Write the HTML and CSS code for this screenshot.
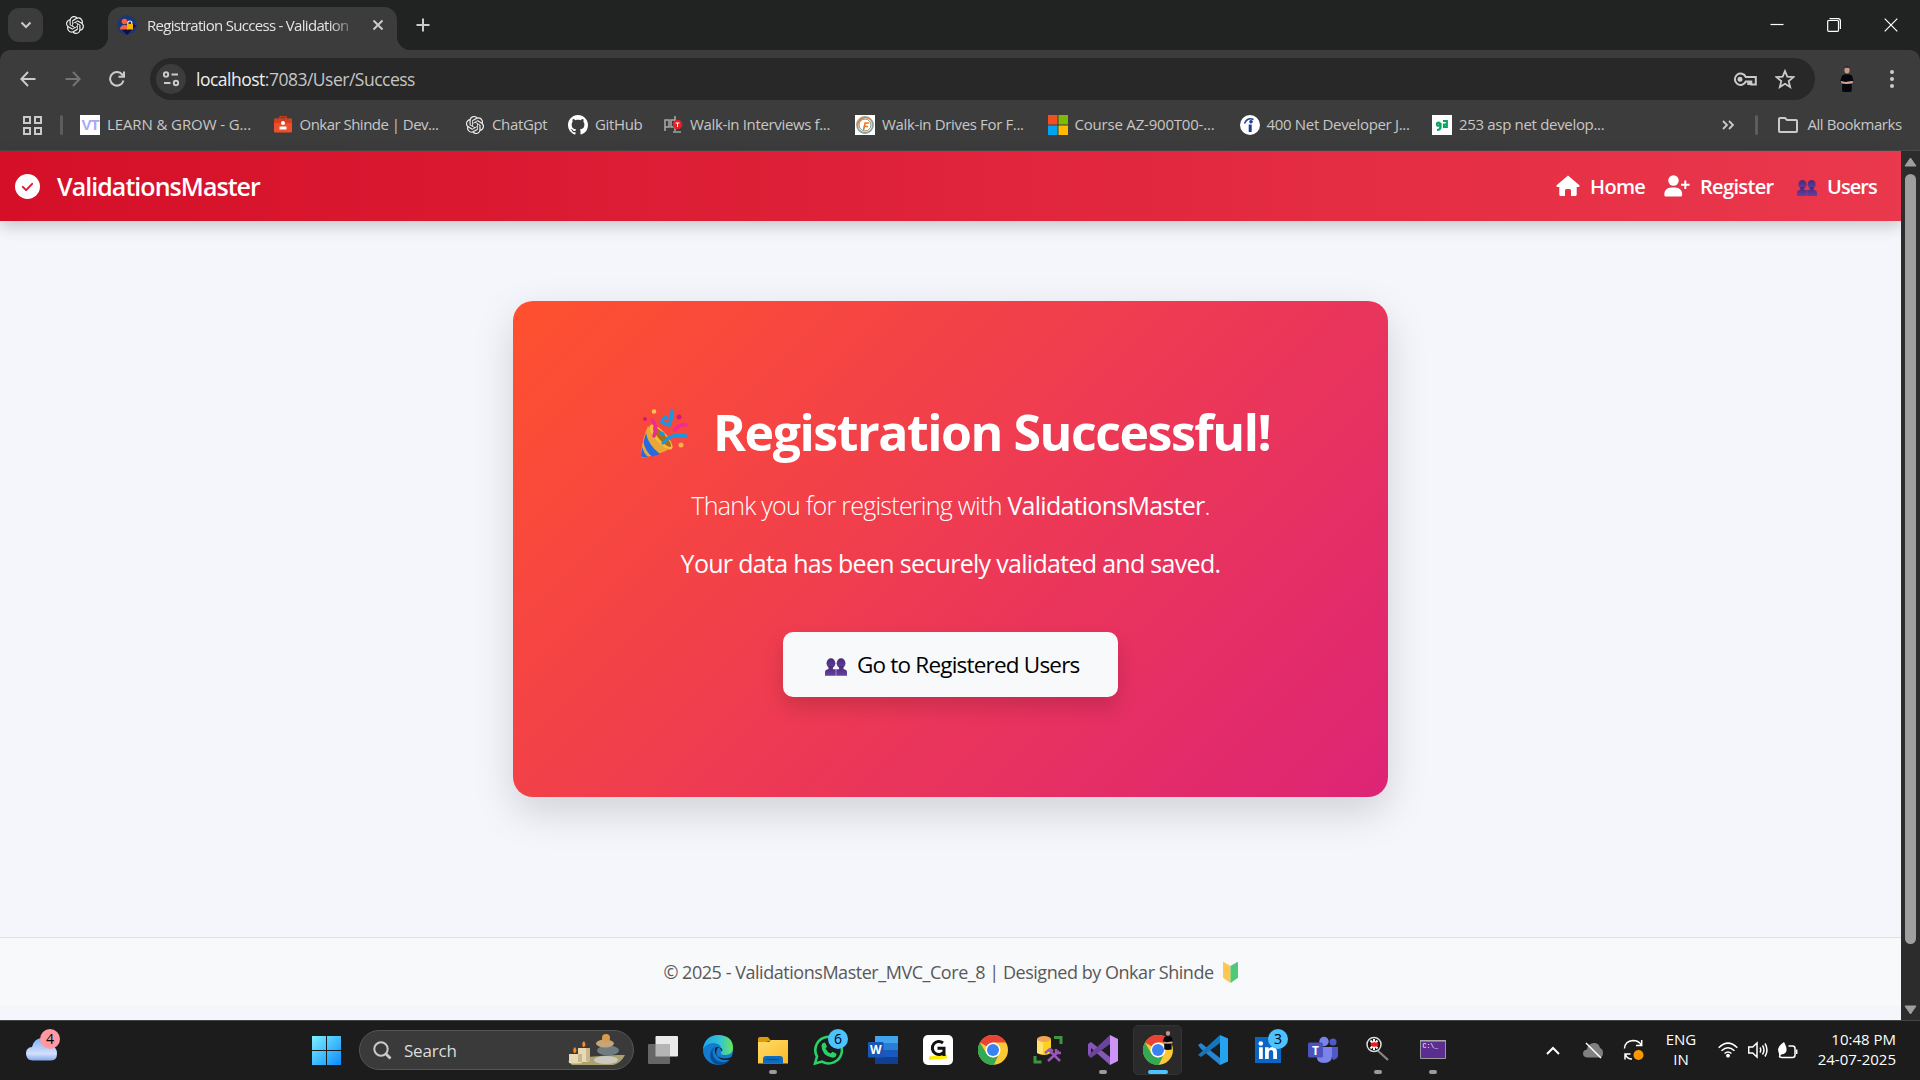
FILE: index.html
```html
<!DOCTYPE html>
<html lang="en">
<head>
<meta charset="utf-8">
<title>Registration Success - ValidationsMaster</title>
<link rel="stylesheet" href="styles.css">
</head>
<body>
<svg width="0" height="0" class="defs">
  <defs>
    <linearGradient id="gWin" x1="0" y1="0" x2="1" y2="1"><stop offset="0" stop-color="#7df0ff"/><stop offset="1" stop-color="#0a8cff"/></linearGradient>
    <linearGradient id="gCloud" x1="0" y1="0" x2="0" y2="1"><stop offset="0" stop-color="#7fb0f5"/><stop offset=".7" stop-color="#d3e0fb"/><stop offset="1" stop-color="#84a8ee"/></linearGradient>
    <linearGradient id="gEdge" x1="0" y1="0" x2="1" y2="0"><stop offset="0" stop-color="#1fa2e8"/><stop offset=".6" stop-color="#35c7d0"/><stop offset="1" stop-color="#6de653"/></linearGradient>
    <linearGradient id="gFold" x1="0" y1="0" x2="1" y2="1"><stop offset="0" stop-color="#ffdc6b"/><stop offset="1" stop-color="#fbb924"/></linearGradient>
    <linearGradient id="gPpl" x1="0" y1="0" x2="0" y2="1"><stop offset="0" stop-color="#472a74"/><stop offset="1" stop-color="#6440a4"/></linearGradient>
    <symbol id="gpt" viewBox="0 0 24 24"><path d="M22.2819 9.8211a5.9847 5.9847 0 0 0-.5157-4.9108 6.0462 6.0462 0 0 0-6.5098-2.9A6.0651 6.0651 0 0 0 4.9807 4.1818a5.9847 5.9847 0 0 0-3.9977 2.9 6.0462 6.0462 0 0 0 .7427 7.0966 5.98 5.98 0 0 0 .511 4.9107 6.051 6.051 0 0 0 6.5146 2.9001A5.9847 5.9847 0 0 0 13.2599 24a6.0557 6.0557 0 0 0 5.7718-4.2058 5.9894 5.9894 0 0 0 3.9977-2.9001 6.0557 6.0557 0 0 0-.7475-7.0729zm-9.022 12.6081a4.4755 4.4755 0 0 1-2.8764-1.0408l.1419-.0804 4.7783-2.7582a.7948.7948 0 0 0 .3927-.6813v-6.7369l2.02 1.1686a.071.071 0 0 1 .038.052v5.5826a4.504 4.504 0 0 1-4.4945 4.4944zm-9.6607-4.1254a4.4708 4.4708 0 0 1-.5346-3.0137l.142.0852 4.783 2.7582a.7712.7712 0 0 0 .7806 0l5.8428-3.3685v2.3324a.0804.0804 0 0 1-.0332.0615L9.74 19.9502a4.4992 4.4992 0 0 1-6.1408-1.6464zM2.3408 7.8956a4.485 4.485 0 0 1 2.3655-1.9728V11.6a.7664.7664 0 0 0 .3879.6765l5.8144 3.3543-2.0201 1.1685a.0757.0757 0 0 1-.071 0l-4.8303-2.7865A4.504 4.504 0 0 1 2.3408 7.872zm16.5963 3.8558L13.1038 8.364 15.1192 7.2a.0757.0757 0 0 1 .071 0l4.8303 2.7913a4.4944 4.4944 0 0 1-.6765 8.1042v-5.6772a.79.79 0 0 0-.407-.667zm2.0107-3.0231l-.142-.0852-4.7735-2.7818a.7759.7759 0 0 0-.7854 0L9.409 9.2297V6.8974a.0662.0662 0 0 1 .0284-.0615l4.8303-2.7866a4.4992 4.4992 0 0 1 6.6802 4.66zM8.3065 12.863l-2.02-1.1638a.0804.0804 0 0 1-.038-.0567V6.0742a4.4992 4.4992 0 0 1 7.3757-3.4537l-.142.0805L8.704 5.459a.7948.7948 0 0 0-.3927.6813zm1.0976-2.3654l2.602-1.4998 2.6069 1.4998v2.9994l-2.5974 1.4997-2.6067-1.4997Z"/></symbol>
    <symbol id="people" viewBox="0 0 20 16"><g fill="url(#gPpl)"><ellipse cx="5.4" cy="4.6" rx="4" ry="4.6"/><ellipse cx="14.600" cy="4.6" rx="4" ry="4.600"/><path d="M3.200 7h4v3H9.8V16H0v-3.500q0-2 2-2.300l1.200-.4zM12.800 7h4v2.800l1.200.4q2 .3 2 2.300V16h-9.800v-6h2.600z"/></g></symbol>
    <symbol id="me" viewBox="0 0 14 26"><ellipse cx="7" cy="4" rx="2.6" ry="3.6" fill="#c9988a"/><path d="M4.200 3q0-3 2.800-3t2.800 3l-.8-1.300H5z" fill="#222"/><path d="M2 9.500q5-2.500 10 0l1.700 6-2 2.500v7.500q-5 1-9.600 0V18l-2-2.500z" fill="#05070f"/><path d="M.6 15l5 1 6-1 2 .6-1.400 2-5.600.4-5-.4z" fill="#d6a48e"/></symbol>
    <symbol id="chrome" viewBox="0 0 30 30"><circle cx="15" cy="15" r="15" fill="#fcc934"/><path d="M15 15L2 7.500A15 15 0 0 1 28 7.500H15z" fill="#ea4335"/><path d="M2 7.500L8.500 18.750 15 22.500 20 21 15.800 30A15 15 0 0 1 2 7.500z" fill="#34a853"/><circle cx="15" cy="15" r="7.500" fill="#fff"/><circle cx="15" cy="15" r="6" fill="#3b82f0"/></symbol>
  </defs>
</svg>

<div class="browser">
  <div class="tabstrip">
    <div class="tabsearch"><svg width="12" height="8" viewBox="0 0 12 8"><path d="M1.500 1.500L6 6l4.500-4.500" class="ln w2"/></svg></div>
    <svg class="pinned" width="18" height="18" fill="#eee"><use href="#gpt"/></svg>
    <div class="tab">
      <svg width="20" height="20" viewBox="0 0 20 20"><circle cx="10" cy="10" r="10" fill="#1f3675"/><path d="M10 20l9-9-4-3-10 7z" fill="#140e3c"/><circle cx="7.500" cy="6.500" r="2.800" fill="#f2643d"/><path d="M3 14.500q0-4.500 4.500-4.500 2.500 0 3.500 1.200v3.300z" fill="#f2643d"/><path d="M10.800 9.500V8q0-2 2-2t2 2v1.500" fill="none" stroke="#eee" stroke-width="1.200"/><rect x="10" y="9" width="6" height="5.500" fill="#fab400"/></svg>
      <span class="tab-title">Registration Success - Validation</span>
      <svg width="12" height="12" viewBox="0 0 12 12"><path d="M1.500 1.500l9 9m0-9l-9 9" class="ln w2"/></svg>
    </div>
    <svg class="newtab" width="14" height="14" viewBox="0 0 14 14"><path d="M7 .5v13M.5 7h13" class="ln w2"/></svg>
    <div class="winctl">
      <svg width="14" height="14" viewBox="0 0 14 14"><path d="M.5 6.500h13" class="wl"/></svg>
      <svg width="14" height="14" viewBox="0 0 14 14"><rect x=".7" y="2.500" width="10.800" height="10.800" rx="1" class="wl"/><path d="M2.500 .7H11q2.400 0 2.400 2.400V11" class="wl"/></svg>
      <svg width="14" height="14" viewBox="0 0 14 14"><path d="M.7 .7l12.600 12.600m0-12.600L.7 13.300" class="wl"/></svg>
    </div>
  </div>

  <div class="chrome-bars">
    <div class="toolbar">
      <svg class="nav1" width="16" height="16" viewBox="0 0 16 16"><path d="M15.500 8H1.500M8 1L1.300 8 8 15" class="ln w2"/></svg>
      <svg class="nav2" width="16" height="16" viewBox="0 0 16 16"><path d="M.5 8h14M8 1l6.700 7L8 15" class="ln w2 dim"/></svg>
      <svg class="nav3" width="16" height="16" viewBox="0 0 16 16"><path d="M14.500 9.500A6.800 6.800 0 1 1 13.200 3.500L15 5.500M15 .5v5.200H9.500" class="ln w2"/></svg>
      <div class="omnibox">
        <div class="site"><svg width="16" height="16" viewBox="0 0 16 16"><g class="ln w2"><circle cx="3" cy="3.500" r="2.200"/><path d="M8.500 3.500H15M1 12h6.500"/><circle cx="13" cy="12" r="2.200"/></g></svg></div>
        <span class="url"><b>localhost</b>:7083/User/Success</span>
        <svg class="key" width="24" height="15" viewBox="0 0 24 15"><path d="M12.800 5h10v7.500h-4.500V9.500h-2V12h-1V9.500h-2.500A5.700 5.700 0 1 1 12.800 5z" class="ln w2"/><circle cx="7" cy="7.300" r="2.500" fill="#ccc"/></svg>
        <svg width="20" height="20" viewBox="0 0 20 20"><path d="M10 2l2.300 5.700 6.200.4-4.800 4 1.500 6L10 14.800l-5.200 3.300 1.500-6-4.800-4 6.200-.4z" class="ln w18"/></svg>
      </div>
      <svg class="avatar" width="14" height="26"><use href="#me"/></svg>
      <svg class="dots" width="4" height="18" viewBox="0 0 4 18"><g fill="#ccc"><circle cx="2" cy="2" r="2"/><circle cx="2" cy="9" r="2"/><circle cx="2" cy="16" r="2"/></g></svg>
    </div>
    <div class="bookmarks">
      <svg class="apps" width="19" height="19" viewBox="0 0 19 19"><path d="M1 1h6v6H1zM12 1h6v6h-6zM1 12h6v6H1zM12 12h6v6h-6z" class="ln w2"/></svg>
      <i class="sep"></i>
      <div class="bm"><span class="vt">VT</span><span class="t1">LEARN &amp; GROW - G...</span></div>
      <div class="bm"><svg width="20" height="20" viewBox="0 0 20 20"><path d="M7 4V1.800h6V4" fill="none" stroke="#c7381c" stroke-width="1.500"/><rect x="1" y="3.500" width="18" height="14" rx="1" fill="#ee4f2a"/><path d="M1 4h18v4H1z" fill="#d43f1e"/><circle cx="10" cy="8" r="2" fill="#fff"/><path d="M6.500 14.500v-3h7v3z" fill="#fff"/></svg><span class="t2">Onkar Shinde | Dev...</span></div>
      <div class="bm w103"><svg width="20" height="20" viewBox="-1 -1 22 22" fill="#eee"><use href="#gpt" width="20" height="20"/></svg><span class="t3">ChatGpt</span></div>
      <div class="bm w95"><svg width="20" height="20" viewBox="0 0 16 16"><path fill="#fff" d="M8 0C3.580 0 0 3.580 0 8c0 3.540 2.290 6.530 5.470 7.590.4.070.55-.17.55-.38 0-.19-.01-.82-.01-1.490-2.010.37-2.530-.49-2.690-.94-.09-.23-.48-.94-.82-1.130-.28-.15-.68-.52-.01-.53.63-.01 1.080.58 1.230.82.72 1.210 1.870.87 2.330.66.070-.52.28-.87.51-1.070-1.780-.2-3.640-.89-3.640-3.950 0-.87.31-1.590.82-2.150-.08-.2-.36-1.020.08-2.120 0 0 .67-.21 2.200.82.64-.18 1.320-.27 2-.27s1.360.09 2 .27c1.530-1.040 2.200-.82 2.200-.82.44 1.100.16 1.920.08 2.120.51.56.82 1.270.82 2.150 0 3.070-1.870 3.750-3.650 3.950.29.25.54.73.54 1.480 0 1.070-.01 1.930-.01 2.200 0 .21.15.46.55.38A8.010 8.010 0 0 0 16 8c0-4.420-3.580-8-8-8z"/></svg><span class="t4">GitHub</span></div>
      <div class="bm w192"><svg width="20" height="20" viewBox="0 0 20 20"><g fill="none" stroke="#aaa" stroke-width="1.500"><path d="M2 16V5h4v7H2M8 12V5h4v7zM12 1v15"/></g><circle cx="14.500" cy="9.500" r="4.800" fill="#e21f26"/><path d="M12.500 8h4M14.500 8v4" stroke="#fff"/><path d="M10 17h8" stroke="#888" stroke-width="2"/></svg><span class="t5">Walk-in Interviews f...</span></div>
      <div class="bm"><svg width="20" height="20" viewBox="0 0 20 20"><path fill="#fff" d="M0 0h20v20H0z"/><circle cx="10" cy="10" r="8" fill="none" stroke="#999" stroke-width="1.800"/><path d="M3 13A8 8 0 0 1 15 4" fill="none" stroke="#e9823a" stroke-width="1.500"/><circle cx="10" cy="10" r="6" fill="none" stroke="#6a9c72"/><path d="M8.500 15l1.700-7h4M9.500 11.500h3.500" fill="none" stroke="#ef7425" stroke-width="1.700"/></svg><span class="t6">Walk-in Drives For F...</span></div>
      <div class="bm w192"><svg width="20" height="20" viewBox="0 0 20 20"><path fill="#f25022" d="M0 0h9.500v9.500H0z"/><path fill="#7fba00" d="M10.500 0H20v9.500h-9.500z"/><path fill="#00a4ef" d="M0 10.500h9.500V20H0z"/><path fill="#ffb900" d="M10.500 10.500H20V20h-9.500z"/></svg><span class="t7">Course AZ-900T00-...</span></div>
      <div class="bm"><svg width="20" height="20" viewBox="0 0 20 20"><circle cx="10" cy="10" r="10" fill="#fff"/><g stroke="#1c3f94" fill="none"><path d="M4.500 8.500Q7 2 13.500 4.500" stroke-width="1.500"/><path d="M10.200 9.500v7.500" stroke-width="3"/></g><circle cx="11" cy="6.700" r="1.800" fill="#1c3f94"/></svg><span class="t8">400 Net Developer J...</span></div>
      <div class="bm"><svg width="20" height="20" viewBox="0 0 20 20"><path fill="#fff" d="M0 0h20v20H0z"/><g fill="none" stroke="#0aa564" stroke-width="2.200"><circle cx="6.500" cy="9.200" r="1.500"/><path d="M8.500 8v4q0 3-3.500 3M11 6h3.800v7M15 9.500h-3v2.500h3"/></g></svg><span class="t9">253 asp net develop...</span></div>
      <svg class="more" width="12" height="10" viewBox="0 0 12 10"><path d="M1 1l4 4-4 4M7 1l4 4-4 4" class="ln w18"/></svg>
      <i class="sep s2"></i>
      <svg class="folder" width="20" height="16" viewBox="0 0 20 16"><path d="M1 2q0-1 1-1h5l2 2h9q1 0 1 1v10q0 1-1 1H2q-1 0-1-1z" class="ln w2"/></svg>
      <span class="t10">All Bookmarks</span>
    </div>
  </div>
</div>

<div class="viewport">
  <div class="page">
    <header class="navbar">
      <svg width="25" height="25" viewBox="0 0 16 16"><path fill="#fff" d="M16 8A8 8 0 1 1 0 8a8 8 0 0 1 16 0"/><path d="M5 8.200l2.100 2.100 3.900-4" fill="none" stroke="#d81730" stroke-width="1.200" stroke-linecap="round" stroke-linejoin="round"/></svg>
      <span class="brand">ValidationsMaster</span>
      <nav>
        <a><svg width="24" height="22" viewBox="0 0 24 22"><path fill="#fff" d="M12 .5L.6 10.300q-.9 1.300.7 1.700h2v7.500q0 1.500 1.500 1.500H9v-5.500q0-1.500 1.500-1.500h3q1.500 0 1.500 1.500V21h4.200q1.500 0 1.500-1.500V12h2q1.600-.4.7-1.700z"/></svg><span class="n1">Home</span></a>
        <a><svg width="26" height="22" viewBox="0 0 26 22"><g fill="#fff"><circle cx="9.500" cy="5.500" r="5.200"/><path d="M.3 20q0-7.500 7.200-7.500h3.500q7.200 0 7.200 7.500 0 1.500-1.500 1.500H1.800Q.3 21.500.3 20z"/></g><path d="M21.300 5.500v8.500M17 9.700h8.600" stroke="#fff" stroke-width="2"/></svg><span class="n2">Register</span></a>
        <a><svg class="ppl" width="20" height="16"><use href="#people"/></svg><span class="n3">Users</span></a>
      </nav>
    </header>
    <main>
      <section class="card">
        <h1><svg width="50" height="50" viewBox="0 0 50 50"><path d="M8 18Q2 30 1 48q0 2 2 1.500Q20 47 33 39 21 34 8 18z" fill="#eaa636"/><path d="M6 25q2 12 14 21l-8 2.500Q5 43 3.500 34zM2.500 39q1 6 5.500 10H2q-1-.5-1-2zM10 20q6 12 18 21l3-1.500Q18 33 9 18z" fill="#2769e0"/><ellipse cx="21" cy="29" rx="5.500" ry="16" transform="rotate(-42 21 29)" fill="#f8bd3d"/><ellipse cx="22" cy="29" rx="3.500" ry="13" transform="rotate(-42 22 29)" fill="#a86f19"/><g fill="none" stroke-width="3.500" stroke-linecap="round"><path d="M12 12q6 6 2 16M35 22q4-6 11-5" stroke="#f02a94"/><path d="M32 3q0 8-3 14-5-1-7-3 0-5 5-4M23 35q8-10 23-7M21 25l2 1" stroke="#1d96e0"/></g><circle cx="14" cy="3.500" r="2.300" fill="#f5c14a"/><circle cx="5" cy="11" r="2" fill="#d41a78"/><circle cx="39" cy="9" r="2.500" fill="#d41a78"/><circle cx="41" cy="37" r="2.500" fill="#f5b04a"/></svg><span>Registration Successful!</span></h1>
        <p class="lead"><span>Thank you for registering with <b>ValidationsMaster</b>.</span></p>
        <p class="sub"><span>Your data has been securely validated and saved.</span></p>
        <a class="btn"><svg width="22" height="18"><use href="#people"/></svg><span>Go to Registered Users</span></a>
      </section>
    </main>
    <footer><span>© 2025 - ValidationsMaster_MVC_Core_8 | Designed by Onkar Shinde</span><svg width="15" height="21" viewBox="0 0 15 21"><path d="M0 1q0-1.500 1.500-.5l6 3.500v17L1 16.500Q0 16 0 15z" fill="#ffc650"/><path d="M15 1q0-1.500-1.500-.5l-6 3.500v17l6.500-4.500q1-.5 1-1.500z" fill="#4dc978"/></svg></footer>
  </div>
  <div class="scrollbar">
    <svg width="13" height="10" viewBox="0 0 13 10"><path d="M6.500 1L12 9H1z" fill="#9f9f9f" stroke="#9f9f9f" stroke-linejoin="round"/></svg>
    <div class="thumb"></div>
    <svg width="13" height="10" viewBox="0 0 13 10"><path d="M6.500 9L12 1H1z" fill="#9f9f9f" stroke="#9f9f9f" stroke-linejoin="round"/></svg>
  </div>
</div>

<div class="taskbar">
  <div class="weather"><svg width="32" height="24" viewBox="0 0 32 24"><path d="M7 23.500q-7-.5-7-7 0-6 6-6.500Q8 1 17 1q8 0 9 8 5 1.500 5 7.500 0 7-6 7z" fill="url(#gCloud)"/></svg><span class="badge red">4</span></div>
  <svg class="start" width="29" height="29" viewBox="0 0 29 29"><path fill="url(#gWin)" d="M0 0h14v14H0zM15 0h14v14H15zM0 15h14v14H0zM15 15h14v14H15z"/></svg>
  <div class="search"><svg width="19" height="19" viewBox="0 0 19 19"><circle cx="8" cy="8" r="6.700" class="ln w2"/><path d="M12.800 12.800l4.700 4.700" class="ln w3"/></svg><span>Search</span>
    <svg class="zen" width="58" height="32" viewBox="0 0 58 32"><path d="M0 27q30-7 57-6-4 8-12 10H4z" fill="#aaa26f"/><path fill="#e8d9b5" d="M1 20h13v9q-6 1-13 0zM10 14h12v13q-6 2-12 0z"/><path fill="#cbb68b" d="M14 20h-4v8h4zM18 14h4v13h-4z"/><path fill="#f58a2c" d="M6 19q-2-4 1-6 3 4 0 6zM15 13q-2-4 1-6 3 4 0 6z"/><ellipse cx="38" cy="26" rx="12" ry="4" fill="#ccc8c2"/><ellipse cx="40" cy="16.500" rx="11" ry="5" fill="#6e7c80"/><ellipse cx="37" cy="9.500" rx="9" ry="4" fill="#c7a479"/><circle cx="38" cy="4" r="4" fill="#d99c4e"/></svg></div>
  <div class="apps-row">
    <div class="app"><svg viewBox="0 0 30 30"><rect x="7.500" y="1" width="22.500" height="20.500" fill="#eaeaea" rx="1"/><rect x="0" y="9" width="22" height="20" fill="#666" rx="1"/><path fill="#b5b5b5" d="M7.500 9H22v12.500H7.500z"/></svg></div>
    <div class="app"><svg viewBox="0 0 30 30"><circle cx="15" cy="15" r="15" fill="#127bd0"/><path d="M0 14Q2 0 16 0q14 1 14 13 0 7-8 7-5 0-4-3 2-8-7-9Q4 8 0 14z" fill="url(#gEdge)"/><path d="M12 12q-5 5 0 12 6 6 15 1-5 6-13 4.500Q6 27 7.500 18 9 13 12 12z" fill="#0b4c94"/><path d="M18.500 16q-1-4-5.500-4-3 4 1 9 5 4 13.500 1.500 1.500-1 0 2-7 1-10-.5-7-4-3-11 4-1 5 2-1.500 2 0 4z" fill="#1c1c1c"/></svg></div>
    <div class="app run"><svg viewBox="0 0 30 30"><path d="M0 4q0-2 2-2h8l3 4h-1L0 9z" fill="#dc9c07"/><path d="M0 7h11l2-2h17v23.500H0z" fill="url(#gFold)"/><path d="M5 28.500V24q0-3 3-3h14q3 0 3 3v4.500z" fill="#0b6cc0"/><path d="M8 24.500h13" stroke="#0a4c91" stroke-width="1.200"/></svg></div>
    <div class="app"><svg viewBox="0 0 30 30"><path d="M2 28.500L4 21.500A13.300 13.300 0 1 1 9 26.600z" fill="none" stroke="#27d366" stroke-width="2.600"/><path d="M10 8l2-.6 2 4-1.500 2q2 4 5 5l2-1.700 4 2q0 4-4 4Q9 21 8.500 11 8.500 9 10 8z" fill="#27d366"/></svg><span class="badge blue">6</span></div>
    <div class="app"><svg viewBox="0 0 30 30"><path fill="#41a5ee" d="M7 1h23v7H7z"/><path fill="#2b7cd3" d="M7 8h23v7H7z"/><path fill="#185abd" d="M7 15h23v7H7z"/><path fill="#103f91" d="M7 22h23v7H7z"/><rect x="0" y="7" width="15.500" height="15.500" rx="1" fill="#1857b8"/><text x="7.700" y="19" class="ic" font-size="12">W</text></svg></div>
    <div class="app"><svg viewBox="0 0 30 30"><rect width="30" height="30" rx="5" fill="#fff"/><path d="M6 21.500l18-2v4L6 25z" fill="#ffeb00"/><path d="M20 8A6.500 6.500 0 1 0 21 17M14.500 13.200h6.500V21" fill="none" stroke="#111" stroke-width="3"/></svg></div>
    <div class="app"><svg viewBox="0 0 30 30"><use href="#chrome"/></svg></div>
    <div class="app"><svg viewBox="0 0 30 30"><path fill="#fcd21c" d="M4 4h14v14q-7 4-14 0z"/><path fill="#ffe36c" d="M4 5h6v14q-4 0-6-1z"/><ellipse cx="11" cy="4" rx="7" ry="3" fill="#f2a552"/><path d="M21 2.500h7V9M2 21v6h6.500" fill="none" stroke="#3f9443" stroke-width="3"/><path d="M15 26l11-10M16 15l11 11" stroke="#9a56b8" stroke-width="2.500"/><path d="M12 18l5-4 3 2M23 14v4h5" fill="none" stroke="#9a56b8" stroke-width="2.500"/></svg></div>
    <div class="app run"><svg viewBox="0 0 30 30"><path d="M0 9l3-2 19 15v8L3 13v8l-3-1.500z" fill="#8657b9"/><path d="M0 20.500L22 0v9L3 23z" fill="#6b459a"/><path d="M22 0l8 4v22l-8 4z" fill="#cc94f7"/></svg></div>
    <div class="app active"><svg viewBox="0 0 30 30"><use href="#chrome"/></svg><svg class="mini" viewBox="0 0 14 26"><use href="#me"/></svg></div>
    <div class="app"><svg viewBox="0 0 30 30"><path d="M0 10l3-2 19 15v7L3 14z" fill="#2686cf"/><path d="M0 20L22 0v8L3 22z" fill="#1676bd"/><path d="M22 0l8 3.500v23L22 30z" fill="#24a4ee"/></svg></div>
    <div class="app"><svg viewBox="0 0 30 30"><rect x="2" y="2" width="26" height="26" fill="#0a66c2"/><g fill="#fff"><circle cx="7.800" cy="8.500" r="2.300"/><path d="M6 12.200h3.800V24H6zM12 12.200h3.700v1.700q1.200-2 3.800-2 4.500 0 4.500 5.400V24h-3.800v-6q0-3-2.200-3t-2.200 3v6H12z"/></g></svg><span class="badge blue">3</span></div>
    <div class="app"><svg viewBox="0 0 30 30"><circle cx="25" cy="7" r="3.500" fill="#5059c9"/><path d="M20 12h10v8q0 4-5 5z" fill="#5059c9"/><circle cx="16" cy="6.500" r="4.700" fill="#7b83eb"/><path d="M9 12h15v9q0 7-8 7t-7-7z" fill="#7b83eb"/><rect x="0" y="7.500" width="15" height="15" rx="1.500" fill="#4b53bc"/><text x="7.500" y="19.500" class="ic" font-size="12">T</text></svg></div>
    <div class="app run"><svg viewBox="0 0 30 30"><path d="M13 14l12 11" stroke="#888" stroke-width="2.200"/><circle cx="11" cy="9.500" r="7" fill="#111" stroke="#ddd" stroke-width="1.500"/><path d="M7.500 5.500l7 8M14.500 5.500l-7 8M11 4v11" stroke="#fff" stroke-width="2"/><ellipse cx="11.500" cy="9.500" rx="4" ry="2.200" fill="#f01818"/></svg></div>
    <div class="app run"><svg viewBox="0 0 30 30"><path fill="#5c2d91" stroke="#999" d="M2.500 5.500h25v18h-25z"/><path stroke="#aaa" stroke-width="1.500" d="M2 5.800h26"/><text x="4.500" y="13" font-size="6.500" font-family="Liberation Mono" fill="#fff">C:\_</text></svg></div>
  </div>
  <div class="tray">
    <svg class="c1" width="14" height="9" viewBox="0 0 14 9"><path d="M1 8l6-6 6 6" class="wl2"/></svg>
    <svg class="c2" width="20" height="17" viewBox="0 0 20 17"><path d="M4 15.500q-4-.5-4-4t4-4Q5 1 11 1q5 0 6 5 3 1 3 5 0 4.500-4 4.500z" fill="#808080"/><path d="M3 1l15 15" stroke="#fff" stroke-width="1.500"/></svg>
    <svg class="c3" width="22" height="22" viewBox="0 0 22 22"><path d="M1.500 9.500Q2 2 10 1.500q6 0 8.500 5M18.700 1v5.500H13M2 20.500V15h5.500M2.500 15.500Q4 20 9 20" class="wl2 thin"/><circle cx="15.500" cy="16" r="5" fill="#ff9800"/></svg>
    <div class="lang"><span>ENG</span><span>IN</span></div>
    <svg class="c4" width="20" height="16" viewBox="0 0 20 16"><path d="M.7 5.700Q10-3.500 19.300 5.700M3.500 8.800q6.500-6 13 0M6.500 11.500q3.500-3 7 0" class="wl2 thin"/><circle cx="10" cy="13.700" r="1.900" fill="#fff"/></svg>
    <svg class="c5" width="20" height="18" viewBox="0 0 20 18"><path d="M.7 6h4L9 2v14l-4.300-4H.7zM12 6.500q1.500 2.500 0 5M14.500 4.500q3 4.500 0 9M17 2.500q4 6.500 0 13" class="wl2 thin"/></svg>
    <svg class="c6" width="20" height="17" viewBox="0 0 20 17"><path d="M10.500 4H14.500q2.500 0 2.500 2.500v6.500q0 2.500-2.500 2.500H4q-2.500 0-2.500-1.500M18.700 7.500v4.500" class="wl2 thin"/><path d="M0 8q0-4 6-8 3 5 2.500 9Q7 13 4 12l-3 3v-3z" fill="#fff"/></svg>
    <div class="clock"><span>10:48 PM</span><span class="date">24-07-2025</span></div>
  </div>
</div>
</body>
</html>
```
FILE: styles.css
```css
* { box-sizing: border-box; }
body { margin: 0; width: 1920px; height: 1080px; overflow: hidden; font-family: "Open Sans", "Noto Sans", sans-serif; display: flex; flex-direction: column; background: #202321; }
svg { display: block; flex: none; }
span { white-space: nowrap; }
.defs { position: absolute; }
.ln { fill: none; stroke: #cacaca; }
.w2 { stroke-width: 2; }
.w18 { stroke-width: 1.800; }
.w3 { stroke-width: 2.800; }
.dim { stroke: #747474; }
.wl { fill: none; stroke: #fff; stroke-width: 1.200; }
.wl2 { fill: none; stroke: #fff; stroke-width: 2; }
.thin { stroke-width: 1.500; }
.ic { fill: #fff; font-weight: 700; text-anchor: middle; }

.browser { height: 151px; flex: none; }
.tabstrip { height: 50px; display: flex; align-items: center; background: #202321; }
.tabsearch { width: 35px; height: 34px; margin-left: 8px; border-radius: 11px; background: #3b3c3b; display: flex; align-items: center; justify-content: center; }
.pinned { margin-left: 23px; }
.tab { position: relative; width: 289px; height: 43px; margin: 7px 0 0 24px; padding: 0 13px 7px 9px; border-radius: 13px 13px 0 0; background: #3c3c3c; display: flex; align-items: center; }
.tab::before, .tab::after { content: ""; position: absolute; bottom: 0; width: 14px; height: 14px; }
.tab::before { left: -14px; background: radial-gradient(circle at 0 0, transparent 14px, #3c3c3c 14.500px); }
.tab::after { right: -14px; background: radial-gradient(circle at 100% 0, transparent 14px, #3c3c3c 14.500px); }
.tab-title { width: 212px; margin: 0 15px 0 10px; font-size: 15px; letter-spacing: -.7px; color: #e3e3e3; -webkit-mask-image: linear-gradient(90deg, #000 182px, transparent 212px); mask-image: linear-gradient(90deg, #000 182px, transparent 212px); }
.newtab { margin-left: 19px; }
.winctl { margin: 0 22px 0 auto; display: flex; gap: 43px; }
.chrome-bars { height: 101px; background: #3c3c3c; border-bottom: 1px solid #4a4a4a; border-radius: 10px 10px 0 0; }
.toolbar { height: 58px; display: flex; align-items: center; }
.nav1 { margin-left: 20px; }
.nav2 { margin-left: 29px; }
.nav3 { margin-left: 28px; }
.omnibox { width: 1665px; height: 42px; margin-left: 25px; padding: 0 20px 0 6px; border-radius: 21px; background: #282828; display: flex; align-items: center; }
.site { width: 30px; height: 30px; border-radius: 50%; background: #3c3c3c; display: flex; align-items: center; justify-content: center; }
.url { margin-left: 10px; font-size: 17.500px; letter-spacing: -.5px; color: #c5c5c5; }
.url b { font-weight: 400; color: #eee; }
.key { margin: 0 18px 0 auto; }
.avatar { margin-left: 25px; }
.dots { margin-left: 36px; }
.bookmarks { height: 34px; display: flex; align-items: center; font-size: 15px; color: #c7c7c7; }
.bookmarks span { margin-top: -2px; }
.apps { margin-left: 23px; }
.sep { width: 3px; height: 20px; margin: 0 17px 0 18px; border-radius: 2px; background: #5d5d5d; }
.bm { width: 192.500px; display: flex; align-items: center; gap: 7px; flex: none; }
.w103 { width: 103px; }
.w95 { width: 95px; }
.w192 { width: 192px; }
.bookmarks .vt { margin-top: 0; width: 20px; height: 20px; background: #fff; color: #a9a8f8; font: 700 15px/20px "Liberation Sans", sans-serif; text-align: center; letter-spacing: -1px; }
.t1 { letter-spacing: -.1px; }
.t2 { letter-spacing: -.52px; }
.t3, .t4 { letter-spacing: -.35px; }
.t5, .t6 { letter-spacing: -.35px; }
.t7 { letter-spacing: -.2px; }
.t8, .t9 { letter-spacing: -.32px; }
.t10 { letter-spacing: -.45px; }
.more { margin-left: 97px; }
.s2 { margin: 0 20px 0 21px; }
.folder { margin-right: 10px; }

.viewport { height: 869px; flex: none; display: flex; background: #f4f6fb; }
.page { width: 1901px; display: flex; flex-direction: column; }
.navbar { height: 70px; flex: none; padding: 0 25px 0 15px; display: flex; align-items: center; background: linear-gradient(90deg, #d50f28, #ea384d); box-shadow: 0 5px 15px rgba(0,0,0,.2); color: #fff; font-weight: 600; }
.brand { margin-left: 17px; font-size: 25px; letter-spacing: -.95px; }
nav { margin-left: auto; display: flex; font-size: 20px; letter-spacing: -.65px; }
nav a { display: flex; align-items: center; }
nav a + a { margin-left: 20px; }
nav a + a + a { margin-left: 23px; }
.ppl { margin-top: 4px; }
.n1, .n2, .n3 { margin-left: 10px; }
.n1 { width: 54px; }
.n2 { width: 74px; }
.n3 { width: 49px; letter-spacing: -.95px; }
main { height: 716px; flex: none; padding-top: 80px; }
.card { width: 875px; height: 496px; margin: 0 auto; padding-top: 100px; border-radius: 20px; background: linear-gradient(135deg, #ff512f, #dd2476); box-shadow: 0 15px 40px rgba(0,0,0,.15); color: #fff; text-align: center; display: flex; flex-direction: column; align-items: center; }
h1 { height: 64px; margin: 0; width: 621px; display: flex; align-items: center; gap: 23px; font-size: 50px; line-height: 64px; font-weight: 700; letter-spacing: -1.450px; }
h1 span { margin-top: -2px; }
.lead { margin: 21px 0 0; font-size: 25px; line-height: 38px; font-weight: 300; letter-spacing: -.74px; }
.lead b { font-weight: 500; }
.sub { margin: 20px 0 0; font-size: 25px; line-height: 38px; letter-spacing: -.7px; }
.btn { width: 335px; height: 65px; margin-top: 50px; padding-left: 42px; border-radius: 10px; background: #f8f9fa; color: #000; box-shadow: 0 10px 20px rgba(0,0,0,.15); display: flex; align-items: center; gap: 10px; font-size: 22.500px; letter-spacing: -.8px; text-align: left; }
.btn svg { margin-top: 4px; }
footer { height: 69px; border-top: 1px solid #dee2e6; background: #f8f9fb; color: #585858; display: flex; justify-content: center; align-items: center; gap: 9px; font-size: 18px; letter-spacing: -.46px; }
.scrollbar { width: 19px; padding: 6px 0 5px; display: flex; flex-direction: column; align-items: center; background: #2c2c2c; }
.thumb { width: 11px; height: 770px; margin: 7px 0 auto; border-radius: 6px; background: #9f9f9f; }

.taskbar { height: 60px; flex: none; padding-bottom: 1px; display: flex; align-items: center; border-top: 1px solid #444; background: #1c1c1c; color: #fff; }
.weather { position: relative; width: 34px; margin: -2px 0 0 26px; }
.badge { position: absolute; width: 20px; height: 20px; border-radius: 50%; color: #000; font-size: 14px; line-height: 20px; text-align: center; }
.red { background: #ff99a4; left: 14px; top: -8px; }
.start { margin-left: 252px; }
.search { width: 275px; height: 40px; margin: 0 1px 0 18px; padding: 0 7px 0 13px; border-radius: 20px; border: 1px solid #555; background: #3a3a3a; display: flex; align-items: center; font-size: 17px; letter-spacing: -.2px; color: #ddd; }
.search span { margin-left: 12px; }
.zen { margin-left: auto; }
.apps-row { display: flex; align-items: center; }
.app { position: relative; width: 55px; height: 50px; display: flex; align-items: center; justify-content: center; }
.app svg { width: 30px; height: 30px; }
.app.run::after, .app.active::after { content: ""; position: absolute; bottom: 1px; width: 8px; height: 4px; border-radius: 2px; background: #9b9b9b; }
.app.active { width: 49px; margin: 0 3px; border-radius: 5px; background: #2a2a2a; border: 1px solid #333; }
.app.active::after { bottom: 0; width: 20px; background: #4cc2ff; }
.app .mini { position: absolute; width: 12px; height: 20px; right: 7px; top: 4px; }
.blue { background: #4cc2ff; right: 7px; top: 4px; }
.tray { margin: 0 24px 0 auto; display: flex; align-items: center; font-size: 15px; line-height: 20px; }
.c1 { margin-right: 23px; }
.c2 { margin-right: 20px; }
.c3 { margin-right: 21px; }
.lang { width: 30px; margin: -2px 22px 0 0; display: flex; flex-direction: column; align-items: center; }
.c4 { margin-right: 10px; }
.c5 { margin-right: 10px; }
.c6 { margin-right: 20px; }
.clock { width: 78px; margin-top: -2px; display: flex; flex-direction: column; align-items: flex-end; }
```
